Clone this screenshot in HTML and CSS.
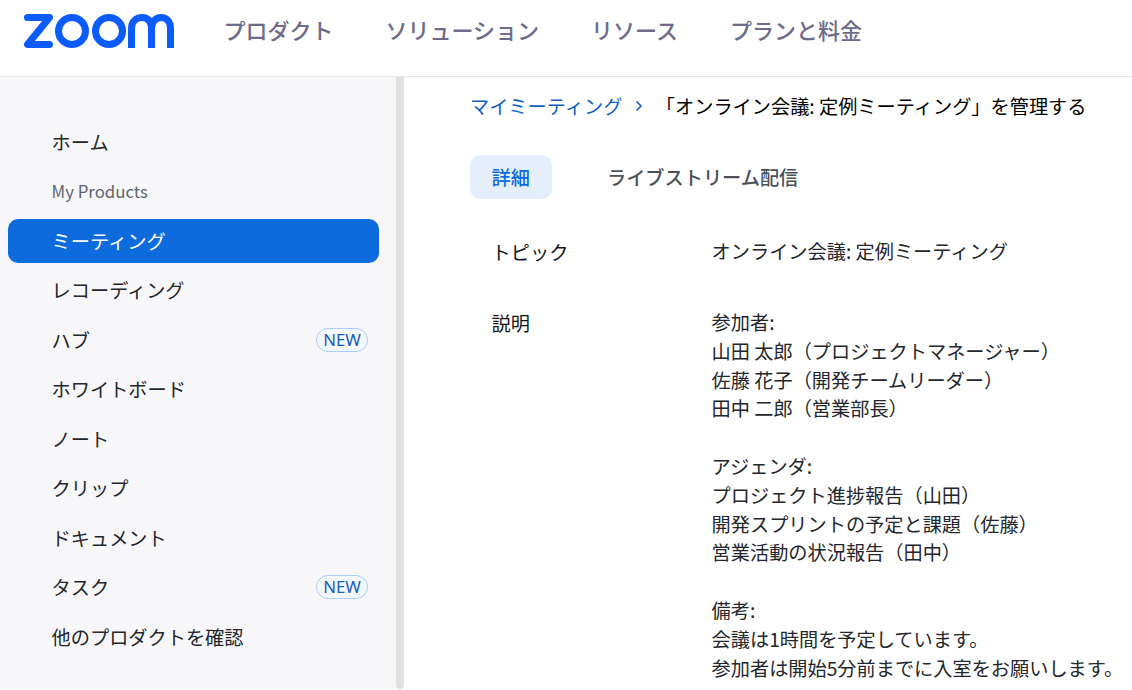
FILE: index.html
```html
<!DOCTYPE html>
<html lang="ja">
<head>
<meta charset="utf-8">
<title>Zoom</title>
<link rel="stylesheet" href="styles.css">
</head>
<body>
<header class="topbar">
  <svg class="logo" viewBox="0 0 150 34" width="150" height="34" aria-label="zoom">
    <path class="logo-z" d="M3.500 3.500H25.500L3.500 30.500H25.500"/>
    <circle class="logo-o" cx="48" cy="17" r="13.500"/>
    <circle class="logo-o" cx="85" cy="17" r="13.500"/>
    <path class="logo-m" d="M107.500 34V14.500C107.500 7.500 112 3.500 118 3.500C124 3.500 127.500 7.500 127.500 14.500V34M127.500 14.500C127.500 7.500 132 3.500 137 3.500C142.500 3.500 146.500 7.500 146.500 14.500V34"/>
  </svg>
  <nav class="mainnav">
    <a>プロダクト</a>
    <a>ソリューション</a>
    <a>リソース</a>
    <a>プランと料金</a>
  </nav>
</header>
<div class="body">
  <aside class="sidebar">
    <ul class="menu">
      <li class="item">ホーム</li>
      <li class="item muted">My Products</li>
      <li class="item active">ミーティング</li>
      <li class="item">レコーディング</li>
      <li class="item">ハブ<span class="badge">NEW</span></li>
      <li class="item">ホワイトボード</li>
      <li class="item">ノート</li>
      <li class="item">クリップ</li>
      <li class="item">ドキュメント</li>
      <li class="item">タスク<span class="badge">NEW</span></li>
      <li class="item">他のプロダクトを確認</li>
    </ul>
  </aside>
  <div class="scrollbar"></div>
  <main class="content">
    <div class="crumbs">
      <a class="crumb-link">マイミーティング</a>
      <svg class="crumb-sep" viewBox="0 0 8 12" width="8" height="12"><path d="M1.500 1.500L6 6L1.500 10.500"/></svg>
      <span class="crumb-current">「オンライン会議: 定例ミーティング」を管理する</span>
    </div>
    <div class="tabs">
      <span class="tab selected">詳細</span>
      <span class="tab">ライブストリーム配信</span>
    </div>
    <div class="field topic">
      <div class="label">トピック</div>
      <div class="value">オンライン会議: 定例ミーティング</div>
    </div>
    <div class="field">
      <div class="label desc">説明</div>
      <div class="value">
        <p>参加者:<br>山田 太郎（プロジェクトマネージャー）<br>佐藤 花子（開発チームリーダー）<br>田中 二郎（営業部長）</p>
        <p>アジェンダ:<br>プロジェクト進捗報告（山田）<br>開発スプリントの予定と課題（佐藤）<br>営業活動の状況報告（田中）</p>
        <p>備考:<br>会議は1時間を予定しています。<br>参加者は開始5分前までに入室をお願いします。</p>
      </div>
    </div>
  </main>
</div>
</body>
</html>
```
FILE: styles.css
```css
* { box-sizing: border-box; }
html, body { margin: 0; height: 100%; overflow: hidden; }
body {
  background: #fff;
  color: #131619;
  font-family: "Noto Sans CJK JP", "Noto Sans", sans-serif;
  font-size: 19.2px;
}
.topbar {
  height: 77px;
  display: flex;
  align-items: flex-start;
  padding: 14px 0 0 24px;
  border-bottom: 1px solid #e8e8ec;
}
.logo { flex: none; }
.logo-z, .logo-o, .logo-m { fill: none; stroke: #0b5cff; stroke-width: 7; }
.logo-z { stroke-linejoin: round; stroke-linecap: round; }
.mainnav {
  display: flex;
  gap: 52px;
  margin: -1px 0 0 49.500px;
  color: #6e6a8a;
  font-size: 22px;
  font-weight: 500;
  line-height: 32px;
}
.body { display: flex; height: 612px; }
.sidebar { width: 396px; background: #f7f7fa; padding-top: 42.700px; flex: none; }
.scrollbar { width: 8px; height: 612px; background: #e0e0e0; border-radius: 0 0 4px 4px; flex: none; }
.menu { list-style: none; margin: 0; padding: 0 17px 0 8px; }
.item {
  height: 44px;
  margin-bottom: 5.500px;
  padding: 0 11px 0 43.600px;
  display: flex;
  align-items: center;
  justify-content: space-between;
  border-radius: 10px;
  color: #23262b;
  line-height: 44px;
}
.item.muted { color: #5f6670; font-size: 16.800px; line-height: 42px; }
.item.active { background: #0e6bde; color: #fff; }
.badge {
  height: 24px;
  width: 52px;
  border: 1px solid #a9cdf8;
  border-radius: 12px;
  background: #f3f8ff;
  color: #1a5cb8;
  font-family: "Noto Sans", sans-serif;
  font-size: 16.800px;
  line-height: 22px;
  text-align: center;
}
.content { flex: 1; padding: 13px 0 0 66px; min-width: 0; }
.crumbs { display: flex; align-items: center; height: 32px; white-space: nowrap; }
.crumb-link { color: #0e5fc4; }
.crumb-sep { margin: 0 21px 0 13px; }
.crumb-sep path { fill: none; stroke: #1a5cb8; stroke-width: 1.600; }
.crumb-current { color: #000; margin-left: -8.500px; }
.tabs { display: flex; gap: 33.800px; margin-top: 33px; }
.tab {
  height: 44px;
  padding: 0 21.600px;
  border-radius: 10px;
  line-height: 44px;
  font-weight: 500;
  color: #4b5159;
}
.tab.selected { background: #e5effb; color: #0e6bde; }
.field { display: flex; padding-left: 21.600px; line-height: 28.800px; }
.field.topic { margin-top: 38px; height: 71px; }
.label { width: 220px; flex: none; color: #131619; padding-top: 1px; }
.value { white-space: nowrap; color: #23262b; }
.value p { margin: 0 0 28.800px; }
```
